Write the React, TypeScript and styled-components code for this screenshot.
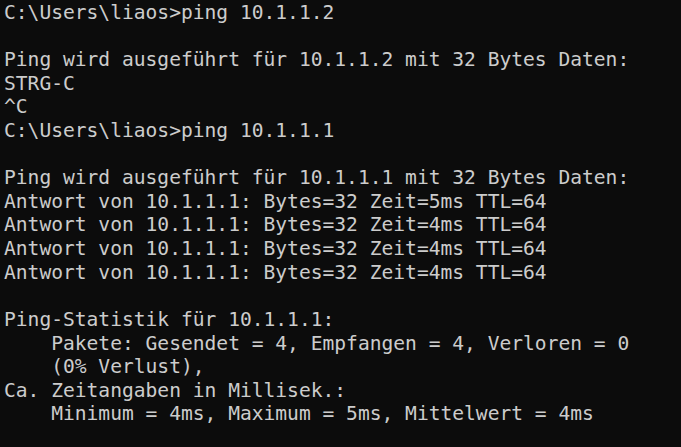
import React from "react";
import styled, { createGlobalStyle } from "styled-components";

const Global = createGlobalStyle`
  html, body { margin: 0; padding: 0; background: #0c0c0c; }
  body { overflow: hidden; }
`;

const Terminal = styled.div`
  width: 681px;
  height: 447px;
  background: #0c0c0c;
  color: #cccccc;
  font-family: "DejaVu Sans Mono", "Liberation Mono", monospace;
  font-size: 19.6px;
  line-height: 23.62px;
  padding: 1px 0 0 4px;
  box-sizing: border-box;
  overflow: hidden;
`;

const Line = styled.div`
  white-space: pre;
  height: 23.62px;
`;

const lines = [
  "C:\\Users\\liaos>ping 10.1.1.2",
  "",
  "Ping wird ausgeführt für 10.1.1.2 mit 32 Bytes Daten:",
  "STRG-C",
  "^C",
  "C:\\Users\\liaos>ping 10.1.1.1",
  "",
  "Ping wird ausgeführt für 10.1.1.1 mit 32 Bytes Daten:",
  "Antwort von 10.1.1.1: Bytes=32 Zeit=5ms TTL=64",
  "Antwort von 10.1.1.1: Bytes=32 Zeit=4ms TTL=64",
  "Antwort von 10.1.1.1: Bytes=32 Zeit=4ms TTL=64",
  "Antwort von 10.1.1.1: Bytes=32 Zeit=4ms TTL=64",
  "",
  "Ping-Statistik für 10.1.1.1:",
  "    Pakete: Gesendet = 4, Empfangen = 4, Verloren = 0",
  "    (0% Verlust),",
  "Ca. Zeitangaben in Millisek.:",
  "    Minimum = 4ms, Maximum = 5ms, Mittelwert = 4ms",
];

export default function App() {
  return (
    <>
      <Global />
      <Terminal>
        {lines.map((l, i) => (
          <Line key={i}>{l}</Line>
        ))}
      </Terminal>
    </>
  );
}
